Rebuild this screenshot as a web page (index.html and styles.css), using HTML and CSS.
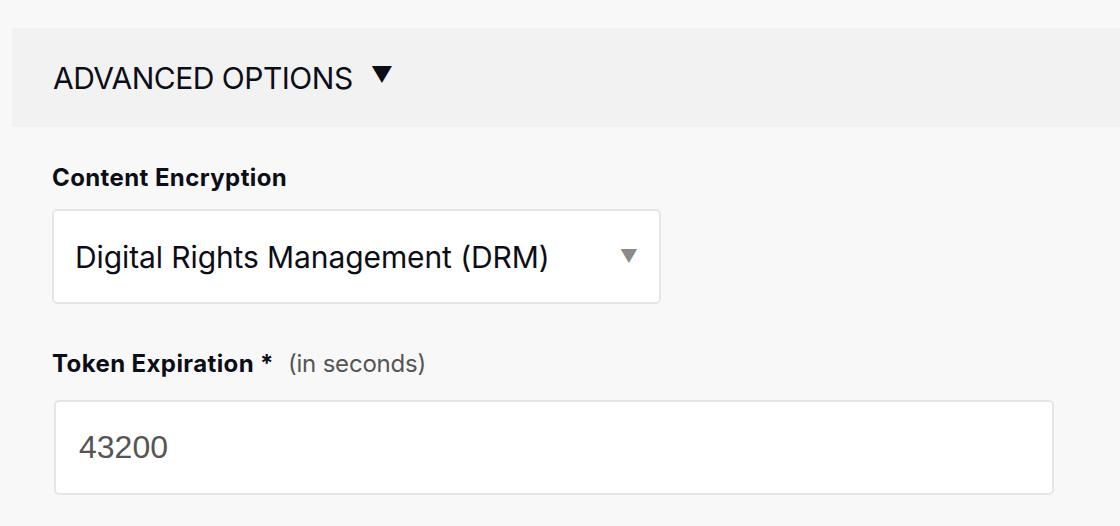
FILE: index.html
```html
<!DOCTYPE html>
<html>
<head>
<meta charset="utf-8">
<link rel="stylesheet" href="styles.css">
</head>
<body>
<div class="page">
  <div class="section-header">
    <span class="section-title">ADVANCED OPTIONS</span>
    <span class="section-caret">▼</span>
  </div>
  <div class="form">
    <div class="field">
      <div class="field-label"><span class="label-strong">Content Encryption</span></div>
      <div class="select">
        <span class="select-value">Digital Rights Management (DRM)</span>
        <span class="select-arrow">▼</span>
      </div>
    </div>
    <div class="field field-token">
      <div class="field-label"><span class="label-strong">Token Expiration *</span><span class="label-hint">(in seconds)</span></div>
      <div class="input">
        <span class="input-value">43200</span>
      </div>
    </div>
  </div>
</div>
</body>
</html>
```

FILE: styles.css
```css
html, body {
  margin: 0;
  padding: 0;
  background: #f8f8f8;
}
body {
  font-family: "Inter", "Roboto", sans-serif;
  color: #0c0e17;
}
.page {
  padding: 28px 0 0 12px;
}
.section-header {
  height: 99px;
  background: #f2f2f2;
  display: flex;
  align-items: center;
  padding-left: 41px;
  gap: 18px;
}
.section-title {
  font-size: 30px;
  letter-spacing: -0.5px;
}
.section-caret {
  font-size: 22px;
  margin-top: -8px;
}
.form {
  padding-left: 40px;
}
.field {
  display: flex;
  flex-direction: column;
}
.field-label {
  margin-top: 37px;
  height: 28px;
  line-height: 28px;
  font-size: 24px;
  display: flex;
  align-items: baseline;
  gap: 14px;
}
.label-strong {
  font-weight: 700;
  letter-spacing: 0.4px;
}
.label-hint {
  color: #555555;
  font-weight: 400;
  letter-spacing: -0.2px;
}
.select {
  margin-top: 17px;
  width: 605px;
  height: 91px;
  background: #ffffff;
  border: 2px solid #e6e6e6;
  border-radius: 5px;
  display: flex;
  align-items: center;
  justify-content: space-between;
}
.select-value {
  padding-left: 21px;
  font-size: 30px;
  letter-spacing: -0.1px;
}
.select-arrow {
  color: #8a8a8a;
  font-size: 18px;
  padding-right: 21px;
}
.field-token .field-label {
  margin-top: 46px;
}
.input {
  margin-top: 22px;
  margin-left: 2px;
  width: 996px;
  height: 91px;
  background: #ffffff;
  border: 2px solid #e6e6e6;
  border-radius: 5px;
  display: flex;
  align-items: center;
}
.input-value {
  padding-left: 23px;
  font-family: "Liberation Sans", Arial, sans-serif;
  font-size: 32px;
  color: #555555;
}
```
